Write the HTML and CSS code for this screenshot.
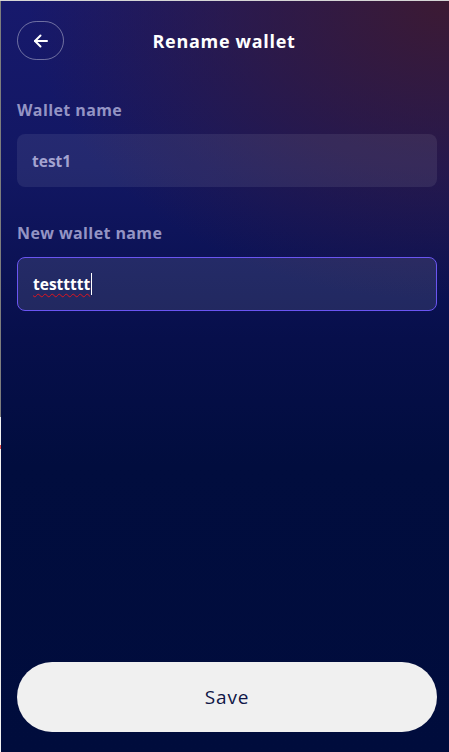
FILE: index.html
```html
<!DOCTYPE html>
<html lang="en">
<head>
<meta charset="utf-8">
<title>Rename wallet</title>
<link rel="stylesheet" href="styles.css">
</head>
<body>
<div class="frame">
  <div class="edge"></div>
  <main class="app">
    <header class="header">
      <button class="back" aria-label="Back">
        <svg width="20" height="20" viewBox="0 0 20 20" fill="none" stroke="#fff" stroke-width="2" stroke-linecap="round" stroke-linejoin="round">
          <path d="M16 10H4"/>
          <path d="M9.5 4.5L4 10l5.5 5.5"/>
        </svg>
      </button>
      <h1 class="title">Rename wallet</h1>
      <span class="spacer"></span>
    </header>

    <section class="field">
      <label class="label">Wallet name</label>
      <div class="input input-readonly">test1</div>
    </section>

    <section class="field field-second">
      <label class="label">New wallet name</label>
      <div class="input input-active"><span class="typed">testtttt</span><span class="caret"></span></div>
    </section>

    <div class="grow"></div>

    <button class="save">Save</button>
  </main>
</div>
</body>
</html>
```

FILE: styles.css
```css
* { box-sizing: border-box; }
html, body { margin: 0; padding: 0; }
body {
  width: 449px;
  height: 752px;
  overflow: hidden;
  font-family: "Open Sans", "Lato", sans-serif;
  background: #d6d6d6;
  padding-top: 1px;
}
.frame {
  display: flex;
  height: 751px;
}
.edge {
  width: 1px;
  flex: none;
  background: linear-gradient(#7d7d7d 0 416px, #f2f2f2 416px 444px, #e05050 444px 448px, #f2f2f2 448px);
}
.app {
  flex: 1;
  display: flex;
  flex-direction: column;
  padding: 20px 12px 20px 16px;
  background:
    radial-gradient(ellipse 420px 300px at 100% 0%, rgba(62, 26, 48, 0.95) 0%, rgba(62, 26, 48, 0.55) 45%, rgba(62, 26, 48, 0) 100%),
    linear-gradient(180deg, #17196c 0%, #121763 22%, #070f4b 45%, #010d3e 62%, #000c3c 100%);
}
.header {
  display: grid;
  grid-template-columns: 47px 1fr 47px;
  align-items: center;
  height: 39px;
}
.back {
  width: 47px;
  height: 39px;
  border-radius: 20px;
  border: 1px solid rgba(255, 255, 255, 0.38);
  background: transparent;
  display: flex;
  align-items: center;
  justify-content: center;
  padding: 0;
}
.title {
  margin: 0;
  text-align: center;
  color: #ffffff;
  font-size: 18px;
  font-weight: 700;
  letter-spacing: 0.7px;
  padding-right: 6px;
}
.field {
  display: flex;
  flex-direction: column;
  gap: 14px;
  margin-top: 40px;
}
.field-second { margin-top: 36px; }
.label {
  color: #9494c4;
  font-size: 16px;
  font-weight: 700;
  line-height: 20px;
  height: 20px;
  letter-spacing: 0.4px;
}
.input {
  height: 53px;
  border-radius: 8px;
  display: flex;
  align-items: center;
  padding: 0 15px;
  font-size: 15.5px;
  font-weight: 700;
}
.input-readonly {
  background: rgba(255, 255, 255, 0.08);
  color: #a3a3d0;
}
.input-active {
  height: 54px;
  background: rgba(255, 255, 255, 0.1);
  border: 1px solid #6a55f2;
  color: #ffffff;
}
.typed {
  text-decoration: underline wavy #e0141e;
  text-decoration-thickness: 1px;
  text-underline-offset: 3px;
  text-decoration-skip-ink: none;
}
.caret {
  display: inline-block;
  width: 1px;
  height: 22px;
  background: #ffffff;
  margin-left: 1px;
}
.grow { flex: 1; }
.save {
  height: 70px;
  border: none;
  border-radius: 35px;
  background: #f0f0f0;
  color: #0e1546;
  font-family: "Open Sans", "Lato", sans-serif;
  font-size: 19px;
  font-weight: 500;
  letter-spacing: 0.9px;
}
```
